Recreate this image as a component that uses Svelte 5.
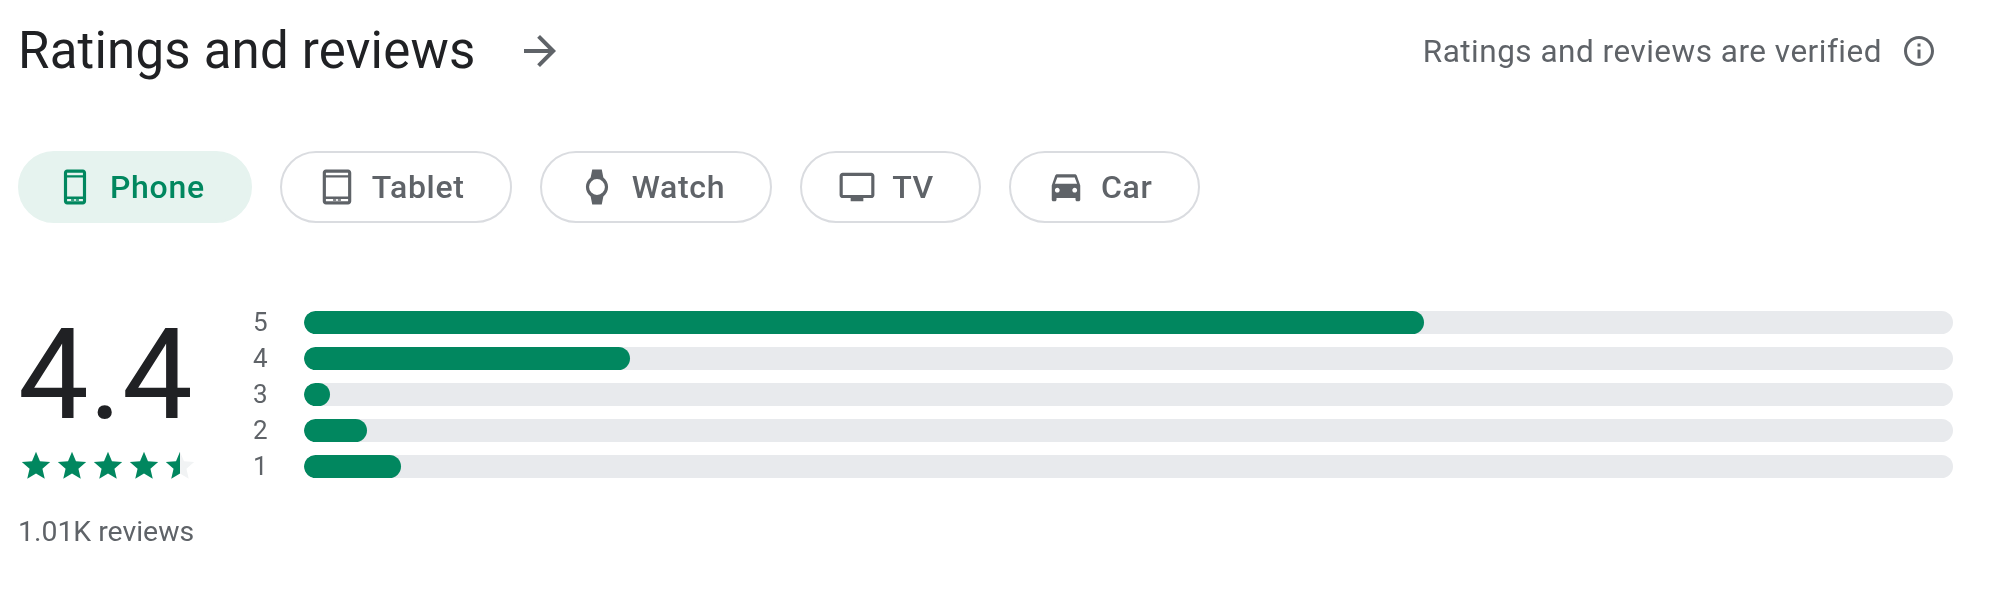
<script>
  const chips = [
    { name: "Phone", active: true },
    { name: "Tablet" },
    { name: "Watch" },
    { name: "TV" },
    { name: "Car" }
  ];
  const bars = [
    { label: 5, pct: 67.9 },
    { label: 4, pct: 19.75 },
    { label: 3, pct: 1.6 },
    { label: 2, pct: 3.8 },
    { label: 1, pct: 5.9 }
  ];
  const star = "M12 17.27L18.18 21l-1.64-7.03L22 9.24l-7.19-.61L12 2 9.19 8.63 2 9.24l5.46 4.73L5.82 21z";
</script>

<div class="page">
  <div class="header">
    <div class="title-wrap">
      <h2>Ratings and reviews</h2>
      <svg class="arrow" viewBox="0 0 24 24" width="48" height="48"><path d="M12 4l-1.41 1.41L16.17 11H4v2h12.17l-5.58 5.59L12 20l8-8z" /></svg>
    </div>
    <div class="verified">
      <span>Ratings and reviews are verified</span>
      <svg viewBox="0 0 24 24" width="36" height="36"><path d="M11 7h2v2h-2zm0 4h2v6h-2zm1-9C6.48 2 2 6.48 2 12s4.48 10 10 10 10-4.48 10-10S17.52 2 12 2zm0 18c-4.41 0-8-3.59-8-8s3.59-8 8-8 8 3.59 8 8-3.59 8-8 8z" /></svg>
    </div>
  </div>

  <div class="chips">
    {#each chips as chip}
      <div class="chip" class:active={chip.active}>
        <svg viewBox="0 0 24 24" width="38" height="38">
          {#if chip.name === "Phone"}
            <path fill-rule="evenodd" d="M7 1h10c1.100 0 2 .9 2 2v18c0 1.100-.9 2-2 2H7c-1.100 0-2-.9-2-2V3c0-1.100.9-2 2-2zM7 3v1.500h10V3zm0 3v12h10V6zm0 13.500V21h10v-1.500zM9.500 19.700h2v1h-2zm3 0h2v1h-2z" />
          {:else if chip.name === "Tablet"}
            <path fill-rule="evenodd" d="M5 1h14c1.100 0 2 .9 2 2v18c0 1.100-.9 2-2 2H5c-1.100 0-2-.9-2-2V3c0-1.100.9-2 2-2zM5 3v1.500h14V3zm0 3v12h14V6zm0 13.500V21h14v-1.500zM9.500 19.700h2v1h-2zm3 0h2v1h-2z" />
          {:else if chip.name === "Watch"}
            <path fill-rule="evenodd" d="M9 1h6l1 5c1.900 1.400 3 3.600 3 6s-1.100 4.600-3 6l-1 5H9l-1-5c-1.900-1.400-3-3.600-3-6s1.100-4.600 3-6zM12 7a5 5 0 1 0 0 10 5 5 0 0 0 0-10z" />
          {:else if chip.name === "TV"}
            <path d="M21 3H3c-1.100 0-2 .9-2 2v12c0 1.100.9 2 2 2h5v2h8v-2h5c1.100 0 1.990-.9 1.990-2L23 5c0-1.100-.9-2-2-2zm0 14H3V5h18v12z" />
          {:else}
            <path d="M18.920 5.010C18.720 4.420 18.160 4 17.500 4h-11c-.66 0-1.210.42-1.420 1.010L3 11v9c0 .55.45 1 1 1h1c.55 0 1-.45 1-1v-1h12v1c0 .55.45 1 1 1h1c.55 0 1-.45 1-1v-9l-2.080-5.990zM6.500 15.500c-.83 0-1.500-.67-1.500-1.500s.67-1.500 1.500-1.500 1.500.67 1.500 1.500-.67 1.500-1.500 1.500zm11 0c-.83 0-1.500-.67-1.500-1.500s.67-1.500 1.500-1.500 1.500.67 1.500 1.500-.67 1.500-1.500 1.500zM5 10l1.500-4h11L19 10H5z" />
          {/if}
        </svg>
        <span>{chip.name}</span>
      </div>
    {/each}
  </div>

  <div class="summary">
    <div class="score">
      <div class="big">4.4</div>
      <div class="stars">
        {#each [0, 1, 2, 3] as i}
          <svg viewBox="0 0 24 24" width="34" height="34"><path d={star} /></svg>
        {/each}
        <svg viewBox="0 0 24 24" width="34" height="34">
          <path d={star} class="empty" />
          <path d="M12 2L9.19 8.63 2 9.24l5.460 4.730L5.820 21 12 17.270z" />
        </svg>
      </div>
      <div class="count">1.01K reviews</div>
    </div>
    <div class="bars">
      {#each bars as bar}
        <div class="label">{bar.label}</div>
        <div class="track"><div class="fill" style="width: {bar.pct}%"></div></div>
      {/each}
    </div>
  </div>
</div>

<style>
  :global(body) {
    margin: 0;
    background: #fff;
  }
  .page {
    height: 616px;
    box-sizing: border-box;
    padding: 19px 43px 0 18px;
    font-family: Roboto, "Liberation Sans", sans-serif;
    color: #5f6368;
    overflow: hidden;
    filter: blur(0.5px);
  }
  .header {
    display: flex;
    justify-content: space-between;
    align-items: center;
    height: 64px;
  }
  .title-wrap {
    display: flex;
    align-items: center;
    gap: 41px;
  }
  h2 {
    margin: 0;
    font-size: 51px;
    line-height: 64px;
    font-weight: 400;
    letter-spacing: 0.2px;
    color: #202124;
  }
  svg {
    fill: currentColor;
    flex: none;
    display: block;
  }
  .arrow {
    color: #5f6368;
  }
  .verified {
    display: flex;
    align-items: center;
    gap: 19px;
    font-size: 31.5px;
    letter-spacing: 0.5px;
    margin-right: 16px;
  }
  .chips {
    display: flex;
    gap: 28px;
    margin-top: 68px;
  }
  .chip {
    display: flex;
    align-items: center;
    gap: 16px;
    height: 72px;
    box-sizing: border-box;
    padding: 0 45px 0 36px;
    border: 2px solid #dadce0;
    border-radius: 36px;
    font-size: 32px;
    font-weight: 500;
    letter-spacing: 0.7px;
  }
  .chip.active {
    background: #e6f3ef;
    border-color: #e6f3ef;
    color: #01875f;
  }
  .summary {
    display: flex;
    margin-top: 88px;
  }
  .score {
    width: 235px;
    flex: none;
  }
  .big {
    font-size: 126px;
    line-height: 127px;
    color: #202124;
    margin: 1px 0 0 0;
  }
  .stars {
    display: flex;
    gap: 2px;
    margin-top: 10px;
    margin-left: 1px;
    color: #01875f;
  }
  .empty {
    fill: #f1f3f4;
  }
  .count {
    margin-top: 33px;
    font-size: 28.4px;
    line-height: 32px;
  }
  .bars {
    flex: 1;
    display: grid;
    grid-template-columns: 51px 1fr;
    row-gap: 13px;
    align-items: center;
    align-content: start;
  }
  .label {
    font-size: 26px;
    line-height: 23px;
  }
  .track {
    height: 23px;
    border-radius: 12px;
    background: #e8eaed;
    overflow: hidden;
  }
  .fill {
    height: 100%;
    border-radius: 12px;
    background: #01875f;
  }
</style>
